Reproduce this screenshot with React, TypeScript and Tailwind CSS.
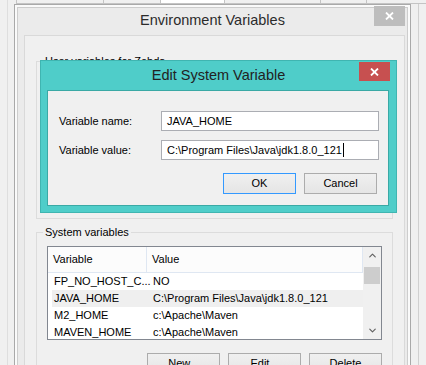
import { ChevronDown, ChevronUp } from 'lucide-react';

const tabs = [
  { w: 'w-[87px]', bg: 'bg-[#f0f0f0]' },
  { w: 'w-[57px]', bg: 'bg-[#f0f0f0]' },
  { w: 'w-[64px]', bg: 'bg-white' },
  { w: 'w-[96px]', bg: 'bg-[#f0f0f0]' },
  { w: 'w-[46px]', bg: 'bg-[#f0f0f0]' },
  { w: 'w-[60px]', bg: 'bg-[#f0f0f0]' },
];

const rows = [
  { name: 'FP_NO_HOST_C...', value: 'NO' },
  { name: 'JAVA_HOME', value: 'C:\\Program Files\\Java\\jdk1.8.0_121', selected: true },
  { name: 'M2_HOME', value: 'c:\\Apache\\Maven' },
  { name: 'MAVEN_HOME', value: 'c:\\Apache\\Maven' },
];

function CloseGlyph() {
  return (
    <svg width="9" height="8" viewBox="0 0 9 8" fill="none">
      <path d="M1 0.5 L8 7.5 M8 0.5 L1 7.5" stroke="white" strokeWidth="1.8" />
    </svg>
  );
}

function WinButton({ label, primary }: { label: string; primary?: boolean }) {
  return (
    <button
      className={`flex h-[21px] w-[73px] items-center justify-center border bg-gradient-to-b from-[#f0f0f0] to-[#e5e5e5] text-black ${
        primary ? 'border-[#3399ff]' : 'border-[#acacac]'
      }`}
    >
      {label}
    </button>
  );
}

function EditDialog() {
  return (
    <div className="absolute left-[40px] top-[60px] flex h-[153px] w-[357px] flex-col border border-[#3fb5b1] bg-[#4fcdc9]">
      <div className="flex h-[29px] shrink-0 items-center justify-center text-[14.5px] text-[#222]">
        Edit System Variable
      </div>
      <div className="absolute right-[6px] top-[1px] flex h-[19px] w-[31px] items-center justify-center bg-[#c75050]">
        <CloseGlyph />
      </div>
      <div className="mb-[6px] ml-[6px] mr-[7px] flex flex-1 flex-col border border-[#3aa9a5] bg-[#f0f0f0] pl-[11px] pt-[20px]">
        <div className="flex items-center">
          <div className="w-[102px]">Variable name:</div>
          <div className="flex h-[20px] w-[218px] items-center border border-[#abadb3] bg-white pl-[5px]">
            JAVA_HOME
          </div>
        </div>
        <div className="mt-[9px] flex items-center">
          <div className="w-[102px]">Variable value:</div>
          <div className="flex h-[20px] w-[218px] items-center border border-[#abadb3] bg-white pl-[5px]">
            C:\Program Files\Java\jdk1.8.0_121
            <span className="ml-px h-[14px] w-px bg-black" />
          </div>
        </div>
        <div className="mt-[13px] flex w-[318px] justify-end gap-[8px]">
          <WinButton label="OK" primary />
          <WinButton label="Cancel" />
        </div>
      </div>
    </div>
  );
}

function VariableList() {
  return (
    <div className="flex h-[94px] border border-[#828790] bg-white">
      <div className="flex min-w-0 flex-1 flex-col overflow-hidden">
        <div className="flex h-[26px] shrink-0 border-b border-r border-[#dfe7f2] bg-[#fcfcfc]">
          <div className="flex w-[99px] items-center border-r border-[#dfe7f2] pl-[5px]">Variable</div>
          <div className="flex items-center pl-[5px]">Value</div>
        </div>
        <div className="flex flex-col pl-[4px]">
          {rows.map((r) => (
            <div key={r.name} className={`flex h-[17px] items-center ${r.selected ? 'bg-[#efefef]' : ''}`}>
              <div className="w-[95px] shrink-0 whitespace-nowrap pl-[2px]">{r.name}</div>
              <div className="whitespace-nowrap pl-[6px]">{r.value}</div>
            </div>
          ))}
        </div>
      </div>
      <div className="flex w-[18px] shrink-0 flex-col bg-[#f0f0f0]">
        <div className="flex h-[17px] items-center justify-center text-[#606060]">
          <ChevronUp size={11} strokeWidth={2.5} />
        </div>
        <div className="mx-[1px] mt-[3px] h-[17px] bg-[#cdcdcd]" />
        <div className="flex-1" />
        <div className="flex h-[17px] items-center justify-center text-[#606060]">
          <ChevronDown size={11} strokeWidth={2.5} />
        </div>
      </div>
    </div>
  );
}

function EnvironmentDialog() {
  return (
    <div className="absolute left-[14px] top-[4px] h-[380px] w-[397px] border border-[#a9a9a9] bg-[#fafafa] px-[2px] pt-[2px]">
      <div className="flex h-full flex-col border-x border-t border-[#cdcdcd] bg-[#ebebeb]">
        <div className="flex h-[27px] shrink-0 items-center justify-center pb-[1px] text-[14.5px] text-[#2b2b2b]">
          Environment Variables
        </div>
        <div className="ml-[6px] mr-[2px] flex-1 border border-[#d9d9d9] bg-[#f0f0f0] pt-[18px]">
          <fieldset className="ml-[11px] h-[165px] w-[357px] border border-[#dcdcdc]">
            <legend className="ml-[6px] px-[2px] leading-[14px]">User variables for Zebda</legend>
          </fieldset>
          <fieldset className="ml-[11px] mt-[6px] w-[357px] border border-[#dcdcdc]">
            <legend className="ml-[6px] px-[2px] leading-[14px]">System variables</legend>
            <div className="px-[10px] pt-[7px]">
              <VariableList />
              <div className="mt-[13px] flex justify-end gap-[8px] pb-[10px]">
                <WinButton label="New..." />
                <WinButton label="Edit..." />
                <WinButton label="Delete" />
              </div>
            </div>
          </fieldset>
        </div>
      </div>
      <div className="absolute right-[5px] top-[1px] flex h-[20px] w-[31px] items-center justify-center bg-[#bdbdbd]">
        <CloseGlyph />
      </div>
    </div>
  );
}

export default function App() {
  return (
    <div className="relative h-[365px] w-[426px] overflow-hidden bg-[#f0f0f0] font-['Liberation_Sans',Arial,sans-serif] text-[11px] text-black">
      <div className="absolute inset-y-0 left-[7px] w-px bg-[#dedede]" />
      <div className="absolute inset-y-0 left-[418px] w-px bg-[#d0d0d0]" />
      <div className="absolute left-[16px] top-0 flex h-[4px] border-b border-[#c4c4c4]">
        {tabs.map((t, i) => (
          <div key={i} className={`${t.w} ${t.bg} border-l border-[#c4c4c4]`} />
        ))}
      </div>
      <EnvironmentDialog />
      <EditDialog />
    </div>
  );
}
